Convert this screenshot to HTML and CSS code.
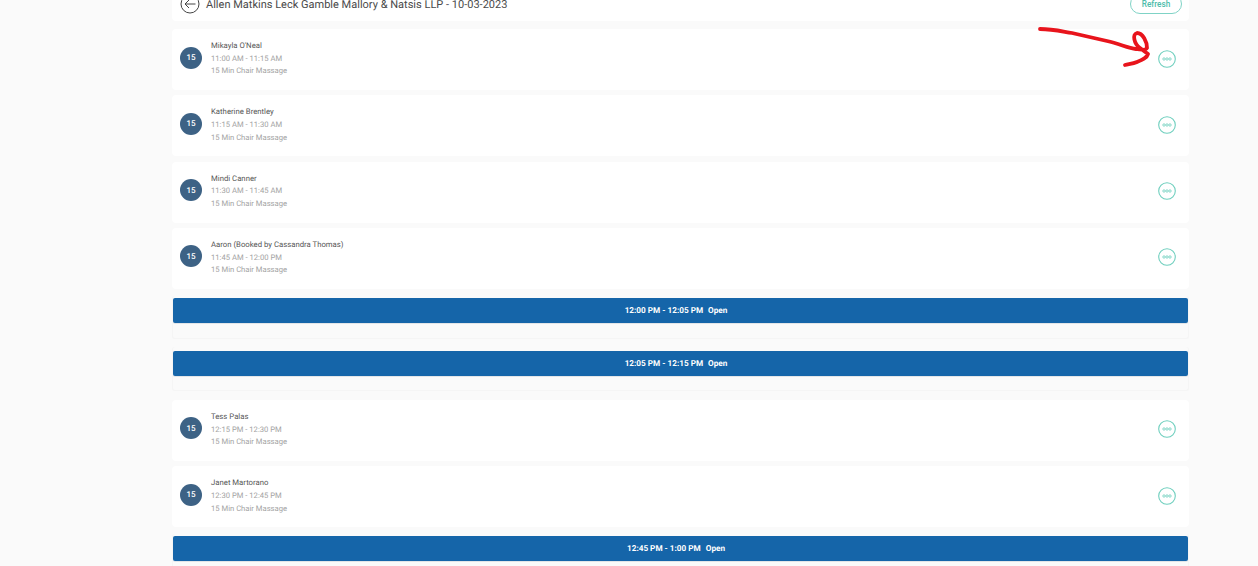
FILE: index.html
```html
<!DOCTYPE html>
<html lang="en">
<head>
<meta charset="utf-8">
<title>Schedule</title>
<link rel="stylesheet" href="styles.css">
</head>
<body>
<main class="page">
  <header class="card head">
    <div class="head-title">
      <svg class="back" viewBox="0 0 20 20" width="20" height="20"><circle cx="10" cy="10" r="9" fill="none" stroke="#444" stroke-width="1"/><path d="M15.5 10H5M9 6l-4 4 4 4" fill="none" stroke="#444" stroke-width="1"/></svg>
      <h1>Allen Matkins Leck Gamble Mallory &amp; Natsis LLP - 10-03-2023</h1>
    </div>
    <button class="refresh">Refresh</button>
  </header>

  <section class="card row"><span class="badge">15</span><div class="info"><div class="name">Mikayla O'Neal</div><div class="meta">11:00 AM - 11:15 AM</div><div class="meta">15 Min Chair Massage</div></div><svg class="more" viewBox="0 0 18 18" width="18" height="18"><circle cx="9" cy="9" r="8.3"/><circle cx="6" cy="9" r="1.2"/><circle cx="9" cy="9" r="1.2"/><circle cx="12" cy="9" r="1.2"/></svg></section>
  <section class="card row"><span class="badge">15</span><div class="info"><div class="name">Katherine Brentley</div><div class="meta">11:15 AM - 11:30 AM</div><div class="meta">15 Min Chair Massage</div></div><svg class="more" viewBox="0 0 18 18" width="18" height="18"><circle cx="9" cy="9" r="8.3"/><circle cx="6" cy="9" r="1.2"/><circle cx="9" cy="9" r="1.2"/><circle cx="12" cy="9" r="1.2"/></svg></section>
  <section class="card row"><span class="badge">15</span><div class="info"><div class="name">Mindi Canner</div><div class="meta">11:30 AM - 11:45 AM</div><div class="meta">15 Min Chair Massage</div></div><svg class="more" viewBox="0 0 18 18" width="18" height="18"><circle cx="9" cy="9" r="8.3"/><circle cx="6" cy="9" r="1.2"/><circle cx="9" cy="9" r="1.2"/><circle cx="12" cy="9" r="1.2"/></svg></section>
  <section class="card row"><span class="badge">15</span><div class="info"><div class="name">Aaron (Booked by Cassandra Thomas)</div><div class="meta">11:45 AM - 12:00 PM</div><div class="meta">15 Min Chair Massage</div></div><svg class="more" viewBox="0 0 18 18" width="18" height="18"><circle cx="9" cy="9" r="8.3"/><circle cx="6" cy="9" r="1.2"/><circle cx="9" cy="9" r="1.2"/><circle cx="12" cy="9" r="1.2"/></svg></section>

  <section class="slot"><div class="bar"><span>12:00 PM - 12:05 PM</span><span>Open</span></div></section>
  <section class="slot"><div class="bar"><span>12:05 PM - 12:15 PM</span><span>Open</span></div></section>

  <section class="card row"><span class="badge">15</span><div class="info"><div class="name">Tess Palas</div><div class="meta">12:15 PM - 12:30 PM</div><div class="meta">15 Min Chair Massage</div></div><svg class="more" viewBox="0 0 18 18" width="18" height="18"><circle cx="9" cy="9" r="8.3"/><circle cx="6" cy="9" r="1.2"/><circle cx="9" cy="9" r="1.2"/><circle cx="12" cy="9" r="1.2"/></svg></section>
  <section class="card row"><span class="badge">15</span><div class="info"><div class="name">Janet Martorano</div><div class="meta">12:30 PM - 12:45 PM</div><div class="meta">15 Min Chair Massage</div></div><svg class="more" viewBox="0 0 18 18" width="18" height="18"><circle cx="9" cy="9" r="8.3"/><circle cx="6" cy="9" r="1.2"/><circle cx="9" cy="9" r="1.2"/><circle cx="12" cy="9" r="1.2"/></svg></section>

  <section class="slot"><div class="bar"><span>12:45 PM - 1:00 PM</span><span>Open</span></div></section>
</main>
<svg class="scribble" viewBox="0 0 1258 566" width="1258" height="566"><path d="M1040 29C1052 29 1060 31 1072 33L1107 41C1120 44 1128 48 1136 49C1141 50 1146 50 1147 48C1147 42 1143 33 1137 33C1132 34 1134 44 1140 48L1148 54C1147 58 1142 60 1137 62C1133 64 1129 64 1125 65"/></svg>
</body>
</html>
```
FILE: styles.css
```css
* { box-sizing: border-box; }
html, body { margin: 0; height: 100%; }
body {
  background: #fafafa;
  font-family: Roboto, "Liberation Sans", sans-serif;
  text-rendering: geometricPrecision;
  overflow: hidden;
  position: relative;
}
.page {
  width: 1017px;
  margin-left: 172px;
  height: 566px;
  overflow: hidden;
}
.card {
  background: #fff;
  border-radius: 4px;
}
.head {
  height: 21px;
  margin-bottom: 8px;
  padding: 0 7px 0 8px;
  display: flex;
  justify-content: space-between;
  align-items: flex-end;
  border-radius: 0 0 4px 4px;
}
.head-title {
  display: flex;
  align-items: center;
  gap: 6px;
  height: 20px;
  margin-bottom: 7px;
}
.back { flex: none; }
h1 {
  margin: 0;
  font-size: 11.03px;
  font-weight: 400;
  color: #4a4a4a;
  white-space: nowrap;
}
.refresh {
  width: 52px;
  height: 20px;
  margin-bottom: 7px;
  border: 1px solid #7fd3c6;
  border-radius: 10px;
  background: #fff;
  color: #4dbcaa;
  font: 500 8.2px Roboto, sans-serif;
  padding: 0;
}
.row {
  height: 61px;
  margin-bottom: 5.33px;
  padding: 0 13px 0 8px;
  display: flex;
  align-items: center;
}
.badge {
  flex: none;
  width: 22px;
  height: 22px;
  border-radius: 50%;
  background: #3d6285;
  color: #fff;
  font-size: 8px;
  font-weight: 500;
  display: flex;
  align-items: center;
  justify-content: center;
  margin-top: -4px;
}
.info {
  margin-left: 9px;
  flex: 1;
  font-size: 7.65px;
  line-height: 12.7px;
  margin-top: -1px;
}
.name { color: #555; font-size: 7.75px; }
.meta { color: #a3a3a3; }
.more {
  flex: none;
  fill: none;
  stroke: #6fcfbe;
  stroke-width: 1.1;
  margin-top: -2px;
}
.more circle + circle { stroke-width: .8; }
.slot {
  height: 43px;
  margin-top: 7px;
  margin-bottom: 8px;
  padding-top: 2px;
  background: #fafafa;
  border: 1px solid #f5f5f5;
  border-top-width: 0;
  border-radius: 3px;
}
.slot + .slot { margin-top: 0; height: 44px; padding-top: 4px; margin-bottom: 9px; }
.bar {
  height: 25px;
  background: #1565a9;
  border-radius: 2px;
  box-shadow: 0 1px 0 #e2e5e8;
  color: #fff;
  font-size: 8.2px;
  font-weight: 700;
  display: flex;
  align-items: center;
  justify-content: center;
  gap: 5px;
  padding: 1px 9px 0 0;
}
.scribble {
  position: absolute;
  left: 0;
  top: 0;
  pointer-events: none;
  fill: none;
  stroke: #e8141c;
  stroke-width: 3.8;
  stroke-linecap: round;
  stroke-linejoin: round;
}
```
